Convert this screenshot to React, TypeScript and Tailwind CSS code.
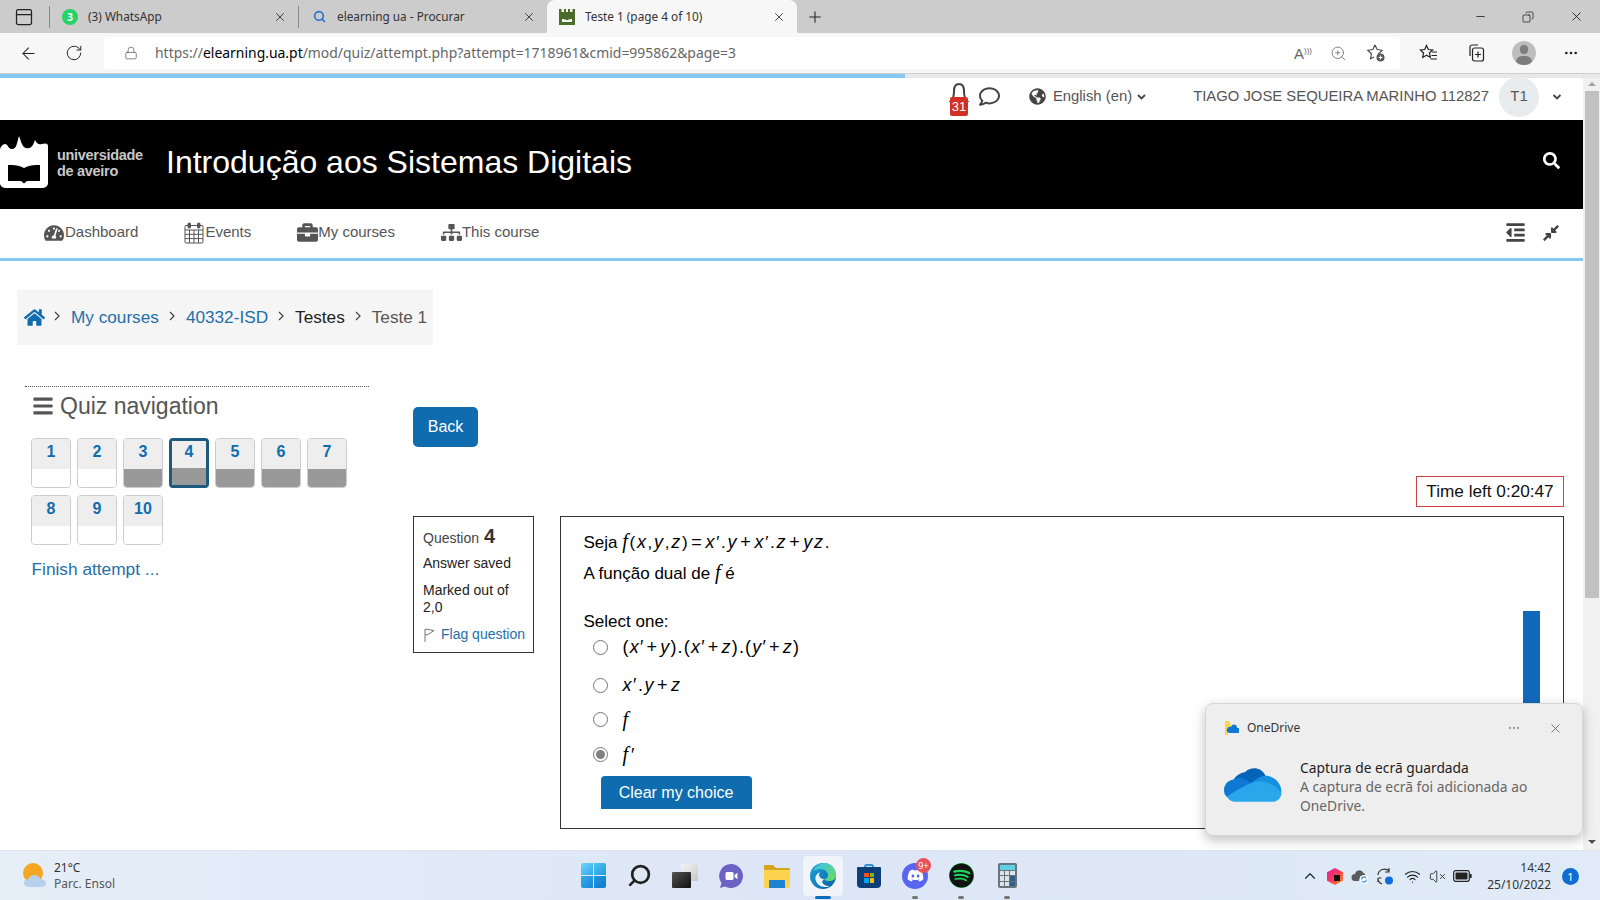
import React from "react";
import {
  ArrowLeft,
  ChevronUp,
  Copy,
  Lock,
  Minus,
  MoreHorizontal,
  PanelTop,
  Plus,
  RotateCw,
  Search,
  VolumeX,
  Wifi,
  X,
  ZoomIn,
} from "lucide-react";
import {
  FaBars,
  FaBriefcase,
  FaCompressAlt,
  FaDiscord,
  FaGlobeAmericas,
  FaHome,
  FaOutdent,
  FaRegComment,
  FaSearch,
  FaSitemap,
  FaSpotify,
  FaTachometerAlt,
} from "react-icons/fa";

const winFont = "font-['Noto_Sans',sans-serif]";

const Tab = ({ icon, title, active, width }: { icon: React.ReactNode; title: string; active?: boolean; width: string }) => (
  <div className={`${width} h-full flex items-center pl-[11px] pr-[11px] ${active ? "bg-[#f7f7f7] rounded-t-lg" : ""}`}>
    <span className="w-[18px] h-[18px] flex items-center justify-center shrink-0">{icon}</span>
    <span className="ml-[9px] flex-1 text-[11.8px] text-[#333] truncate">{title}</span>
    <X size={14} strokeWidth={1.4} className="text-[#222] shrink-0" />
  </div>
);

const CastleIcon = () => (
  <svg width="18" height="18" viewBox="0 0 18 18">
    <path d="M1 1h2.500v3H6V1h2v3h2V1h2v3h2.500V1H17v16H1z" fill="#4a6b2a" />
    <path d="M4 11c2 0 4 .5 5 1.500 1-1 3-1.500 5-1.500v3H4z" fill="#f7f7f7" />
  </svg>
);

const BellBadge = () => (
  <div className="relative w-[22px] h-[34px] mt-[2px]">
    <svg width="22" height="26" viewBox="0 0 22 26" fill="none" stroke="#444" strokeWidth="2" className="absolute left-0 top-0">
      <path d="M11 3c-4 0-5 3-5 7 0 5-1 8-3 10h16c-2-2-3-5-3-10 0-4-1-7-5-7z" />
    </svg>
    <span className="absolute left-[2px] bottom-[-1px] w-[18px] h-[19px] bg-[#d32f24] rounded-[2px] text-white text-[13px] leading-[19px] text-center">31</span>
  </div>
);

const CalendarIcon = () => (
  <svg width="20" height="22" viewBox="0 0 20 22" fill="none" stroke="#555" strokeWidth="1">
    <rect x="1" y="3.500" width="18" height="17.500" rx="1" />
    <path d="M1 8h18M1 12.300h18M1 16.600h18M5.500 8v13M10 8v13M14.500 8v13" />
    <rect x="4" y="1" width="2.500" height="5" rx="1" fill="#555" />
    <rect x="13.500" y="1" width="2.500" height="5" rx="1" fill="#555" />
  </svg>
);

const NavItem = ({ icon, label, className }: { icon: React.ReactNode; label: string; className: string }) => (
  <a className={`flex items-center text-[15px] text-[#555] whitespace-nowrap ${className}`}>
    <span className="w-[21px] flex justify-start">{icon}</span>
    {label}
  </a>
);

const Crumb = ({ children }: { children: React.ReactNode }) => <span className="text-[#1f6fa8]">{children}</span>;
const Sep = () => (
  <svg width="7" height="10" viewBox="0 0 7 10" fill="none" stroke="#444" strokeWidth="1.200" className="mx-[10px] mb-[3px] shrink-0">
    <path d="M1 1l4 4-4 4" />
  </svg>
);

const QuizButton = ({ n, saved, current }: { n: number; saved?: boolean; current?: boolean }) => (
  <div className={`w-[40px] h-[50px] rounded-[4px] overflow-hidden flex flex-col ${current ? "border-[3px] border-[#1d5a7c]" : "border border-[#ccc]"}`}>
    <div className={`${current ? "h-[27px] pt-[1px]" : "h-[30px] pt-[3px]"} bg-[#eeeeee] text-center text-[16px] leading-[20px] font-bold text-[#0f6cae]`}>{n}</div>
    <div className={`flex-1 ${saved ? "bg-[#999999]" : "bg-white"}`} />
  </div>
);

const M = ({ children }: { children: React.ReactNode }) => <span className="italic text-[18px]">{children}</span>;
const F = ({ children }: { children: React.ReactNode }) => (
  <span className="italic text-[20px] font-['Liberation_Serif',serif]">{children}</span>
);
const Op = ({ children }: { children: React.ReactNode }) => <span className="mx-[2px] text-[18px]">{children}</span>;

const Radio = ({ checked }: { checked?: boolean }) => (
  <span className="w-[15px] h-[15px] rounded-full border border-[#767676] bg-white shrink-0 flex items-center justify-center">
    {checked && <span className="w-[9px] h-[9px] rounded-full bg-[#808080]" />}
  </span>
);

const Option = ({ checked, className, children }: { checked?: boolean; className: string; children: React.ReactNode }) => (
  <label className={`flex items-center pl-[9px] ${className}`}>
    <Radio checked={checked} />
    <span className="ml-[15px] text-[18px] leading-[20px] text-black">{children}</span>
  </label>
);

const OneDriveCloud = ({ size = 58 }: { size?: number }) => (
  <svg width={size} height={size * 0.62} viewBox="0 0 60 37">
    <path d="M22 6c6-6 17-5 21 4l-14 15L10 14c2-4 7-7 12-8z" fill="#0364b8" />
    <path d="M9 14C3 15 0 20 0 25c0 3 1 5 3 7l24-8 3-6-12-6c-3-1-6 1-9 2z" fill="#0f78d4" />
    <path d="M43 10c-5 0-9 3-13 6l-5 4 20 13 14-5c2-8-6-18-16-18z" fill="#1490df" />
    <path d="M3 32c2 3 5 5 9 5h38c5 0 9-4 9.500-9-7-9-16-13-24-12-9 1-22 8-32.500 16z" fill="#28a8ea" />
  </svg>
);

const WinLogo = () => (
  <div className="grid grid-cols-2 gap-[1px] w-[25px] h-[25px]">
    <span className="bg-gradient-to-br from-[#6fd5f7] to-[#2ba8e8] rounded-tl-[2px]" />
    <span className="bg-gradient-to-br from-[#4fc3f2] to-[#1e9be0] rounded-tr-[2px]" />
    <span className="bg-gradient-to-br from-[#35ace8] to-[#1488d8] rounded-bl-[2px]" />
    <span className="bg-gradient-to-br from-[#2398e0] to-[#0f78cf] rounded-br-[2px]" />
  </div>
);

const TaskView = () => (
  <div className="relative w-[26px] h-[24px]">
    <span className="absolute right-0 top-0 w-[17px] h-[17px] bg-gradient-to-br from-[#f5f5f5] to-[#c8c8c8] rounded-[1px]" />
    <span className="absolute left-0 bottom-0 w-[19px] h-[16px] bg-gradient-to-br from-[#555] to-[#111] rounded-[1px]" />
  </div>
);

const ChatIcon = () => (
  <svg width="26" height="26" viewBox="0 0 26 26">
    <path d="M13 1a12 12 0 1 1-6 22.400L2 25l1.500-5A12 12 0 0 1 13 1z" fill="#6b62c4" />
    <rect x="7.500" y="9" width="8" height="8" rx="1.500" fill="#fff" />
    <path d="M16.500 12l3-2.200v6.400l-3-2.200z" fill="#fff" />
  </svg>
);

const Explorer = () => (
  <svg width="26" height="24" viewBox="0 0 26 24">
    <path d="M0 2a1 1 0 0 1 1-1h8l3 3h13a1 1 0 0 1 1 1v3H0z" fill="#d9a520" />
    <path d="M0 6h26v17a1 1 0 0 1-1 1H1a1 1 0 0 1-1-1z" fill="#fcd34d" />
    <path d="M5 17a1 1 0 0 1 1-1h14a1 1 0 0 1 1 1v7H5z" fill="#1e82d2" />
  </svg>
);

const EdgeIcon = () => (
  <svg width="26" height="26" viewBox="0 0 26 26">
    <defs>
      <linearGradient id="edgeA" x1="0" y1="0" x2="1" y2="1">
        <stop offset="0" stopColor="#1fa3d8" />
        <stop offset="1" stopColor="#0a5ea8" />
      </linearGradient>
      <linearGradient id="edgeB" x1="0" y1="0" x2="1" y2="1">
        <stop offset="0" stopColor="#35c1f1" />
        <stop offset="1" stopColor="#6fdc5a" />
      </linearGradient>
    </defs>
    <circle cx="13" cy="13" r="13" fill="url(#edgeA)" />
    <path d="M3 8C6 2 11 0 15 0c6 0 11 5 11 12 0 4-3 6-7 6-3 0-4-1-5-2 3 0 4-2 4-4 0-3-3-6-7-6-3 0-6 1-8 2z" fill="url(#edgeB)" />
    <path d="M14 16c-3 0-5-2-5-4 0-1 .5-2 1-2.500C7 10 5 13 5.500 16.500 6.500 21 10 24 15 24c2 0 4-.5 5-1-3 .5-7-1-8-4 .5-1 1.500-2.500 2-3z" fill="#e8f6fc" />
  </svg>
);

const StoreIcon = () => (
  <div className="relative w-[24px] h-[24px] mt-[1px]">
    <span className="absolute left-[7px] top-0 w-[10px] h-[6px] border-2 border-b-0 border-[#2f8fd8] rounded-t-[3px]" />
    <div className="absolute left-0 top-[3px] w-[24px] h-[21px] bg-[#0f3f78] rounded-b-[4px] rounded-t-[1px] flex items-center justify-center">
      <div className="grid grid-cols-2 gap-[1px] w-[10px] h-[10px]">
        <span className="bg-[#f25022]" />
        <span className="bg-[#7fba00]" />
        <span className="bg-[#00a4ef]" />
        <span className="bg-[#ffb900]" />
      </div>
    </div>
  </div>
);

const DiscordIcon = () => (
  <div className="relative w-[26px] h-[26px] rounded-full bg-[#5865f2] flex items-center justify-center">
    <FaDiscord size={17} className="text-white" />
    <span className="absolute left-[14px] top-[-5px] w-[15px] h-[15px] rounded-full bg-[#e8505b] text-white text-[9px] leading-[15px] text-center">9+</span>
  </div>
);

const SpotifyIcon = () => (
  <div className="w-[25px] h-[25px] rounded-full bg-[#1ed760] flex items-center justify-center">
    <FaSpotify size={25} className="text-[#121212]" />
  </div>
);

const CalcIcon = () => (
  <div className="w-[19px] h-[25px] bg-[#66757f] rounded-[2px] p-[2px] flex flex-col gap-[1px]">
    <span className="h-[5px] bg-[#5fd0e0]" />
    <div className="grid grid-cols-3 gap-[1px] flex-1">
      <span className="bg-[#dde3e6]" /><span className="bg-[#dde3e6]" /><span className="bg-[#dde3e6]" />
      <span className="bg-[#dde3e6]" /><span className="bg-[#dde3e6]" /><span className="bg-[#2f5f88]" />
      <span className="bg-[#dde3e6]" /><span className="bg-[#dde3e6]" /><span className="bg-[#2f5f88]" />
    </div>
  </div>
);

const TaskIcon = ({ children, active, running }: { children: React.ReactNode; active?: boolean; running?: boolean }) => (
  <div className="relative w-[46px] h-[50px] flex items-center justify-center pb-[1px]">
    {active && <span className="absolute left-[3px] top-[5px] w-[40px] h-[40px] rounded-[4px] bg-white/60" />}
    <span className="relative">{children}</span>
    {active && <span className="absolute left-[15px] bottom-[2px] w-[16px] h-[3px] rounded bg-[#0f6cbd]" />}
    {running && <span className="absolute left-[20px] bottom-[2px] w-[6px] h-[3px] rounded bg-[#777]" />}
  </div>
);

const WeatherIcon = () => (
  <svg width="26" height="26" viewBox="0 0 26 26">
    <circle cx="11" cy="10" r="10" fill="#f5a623" />
    <path d="M7 24c-3 0-5-1.500-5-4s2-4 4.500-4c1-3 4-4 6-4 3 0 5 2 5.500 4 3 0 6 1.500 6 4s-2 4-5 4z" fill="#b7d0ee" />
  </svg>
);

const FavStar = () => (
  <svg width="20" height="20" viewBox="0 0 20 20" fill="none" stroke="#444" strokeWidth="1.100">
    <path d="M9 2l2.200 4.600 5 .7-3.600 3.500.6 3.400M9 2L6.800 6.600l-5 .7 3.600 3.500-.9 5 3.500-1.800" />
    <circle cx="14.500" cy="14.500" r="4" fill="#555" stroke="none" />
    <path d="M14.500 12.500v4M12.500 14.500h4" stroke="#fff" />
  </svg>
);

const FavoritesIcon = () => (
  <svg width="20" height="20" viewBox="0 0 20 20" fill="none" stroke="#222" strokeWidth="1.200">
    <path d="M7.500 2.500l1.800 4 4.300.5-3.200 3 .9 4.400-3.800-2.200-3.800 2.200.9-4.400-3.200-3 4.300-.5z" />
    <path d="M13 9h5M12.500 12.500h5.500M11.500 16h6.500" />
  </svg>
);

const CollectionsIcon = () => (
  <svg width="20" height="20" viewBox="0 0 20 20" fill="none" stroke="#222" strokeWidth="1.200">
    <path d="M4 13V4a2 2 0 0 1 2-2h6" />
    <rect x="6.500" y="5" width="11" height="13" rx="2" />
    <path d="M12 8.500v6M9 11.500h6" />
  </svg>
);

const BatteryIcon = () => (
  <svg width="19" height="12" viewBox="0 0 19 12" fill="none">
    <rect x="0.700" y="0.700" width="15.600" height="10.600" rx="2" stroke="#222" strokeWidth="1.200" />
    <rect x="2.500" y="2.500" width="12" height="7" rx="1" fill="#222" />
    <rect x="17" y="4" width="1.600" height="4" fill="#222" />
  </svg>
);

const FlagIcon = () => (
  <svg width="12" height="14" viewBox="0 0 12 14" fill="none" stroke="#777" strokeWidth="1">
    <path d="M2 1v13M2 1l9 1.500-6 4-3 .5" />
  </svg>
);

export default function App() {
  return (
    <div className="relative w-[1600px] h-[900px] overflow-hidden flex flex-col bg-white font-['Liberation_Sans',sans-serif]">
      {/* tab strip */}
      <div className={`h-[33px] bg-[#cccccc] flex items-end pl-[14px] pr-0 ${winFont}`}>
        <div className="h-full flex items-center w-[35px] shrink-0">
          <PanelTop size={20} strokeWidth={1.5} className="text-[#222]" />
        </div>
        <span className="w-px h-[22px] bg-[#888] mb-[5px]" />
        <Tab
          width="w-[248px]"
          title="(3) WhatsApp"
          icon={
            <span className="w-[16px] h-[16px] rounded-full bg-[#25d366] text-white text-[10px] font-bold leading-[16px] text-center">3</span>
          }
        />
        <span className="w-px h-[22px] bg-[#888] mb-[5px]" />
        <Tab width="w-[248px]" title="elearning ua - Procurar" icon={<Search size={13} strokeWidth={3} className="text-[#2a72c8]" />} />
        <Tab width="w-[250px]" active title="Teste 1 (page 4 of 10)" icon={<CastleIcon />} />
        <div className="h-full w-[36px] flex items-center justify-center">
          <Plus size={18} strokeWidth={1.4} className="text-[#222]" />
        </div>
        <div className="flex-1" />
        <div className="h-full flex items-center">
          <span className="w-[48px] flex justify-center"><Minus size={13} strokeWidth={1.4} className="text-[#111]" /></span>
          <span className="w-[48px] flex justify-center"><Copy size={12} strokeWidth={1.4} className="text-[#111] -scale-x-100" /></span>
          <span className="w-[48px] flex justify-center"><X size={15} strokeWidth={1.3} className="text-[#111]" /></span>
        </div>
      </div>

      {/* toolbar */}
      <div className="h-[40px] bg-[#f7f7f7] flex items-center">
        <div className="w-[104px] flex items-center shrink-0">
          <ArrowLeft size={19} strokeWidth={1.3} className="ml-[19px] text-[#222]" />
          <RotateCw size={18} strokeWidth={1.3} className="ml-[27px] text-[#222]" />
        </div>
        <div className="w-[1296px] h-[32px] bg-white rounded-[4px] flex items-center pl-[20px] pr-[14px] shrink-0">
          <Lock size={14} strokeWidth={1.2} className="text-[#555]" />
          <span className={`ml-[17px] text-[13.930px] text-[#666] flex-1 ${winFont}`}>
            https://<span className="text-black">elearning.ua.pt</span>/mod/quiz/attempt.php?attempt=1718961&amp;cmid=995862&amp;page=3
          </span>
          <span className="text-[15px] text-[#666] mr-[18px] leading-none whitespace-nowrap">
            A<span className="text-[8px] align-super">)))</span>
          </span>
          <ZoomIn size={17} strokeWidth={1.1} className="text-[#666] mr-[19px]" />
          <FavStar />
        </div>
        <div className="flex-1 flex items-center pl-[19px]">
          <FavoritesIcon />
          <span className="ml-[27px]"><CollectionsIcon /></span>
          <span className="relative ml-[26px] w-[24px] h-[24px] rounded-full bg-[#bdbdbd] overflow-hidden">
            <span className="absolute left-[8px] top-[4px] w-[8px] h-[9px] rounded-full bg-[#7d7d7d]" />
            <span className="absolute left-[4px] top-[15px] w-[16px] h-[12px] rounded-full bg-[#7d7d7d]" />
          </span>
          <MoreHorizontal size={16} className="ml-[27px] text-[#222]" />
        </div>
      </div>

      {/* load progress */}
      <div className="h-[5px] bg-[#e8e8e8] border-t border-[#cfcfcf]">
        <div className="h-full w-[905px] bg-[#85c8f3]" />
      </div>

      <div className="flex-1 min-h-0 flex">
        {/* page */}
        <div className="flex-1 min-w-0 flex flex-col">
          <div className="h-[42px] flex items-center text-[14.850px] text-[#555] pr-[21px] pb-[5px] shrink-0">
            <div className="flex-1" />
            <BellBadge />
            <FaRegComment size={21} className="ml-[9px] text-[#444]" />
            <FaGlobeAmericas size={17} className="ml-[29px] text-[#444]" />
            <span className="ml-[7px]">English (en)</span>
            <svg width="9" height="6" viewBox="0 0 9 6" fill="none" stroke="#444" strokeWidth="1.800" className="ml-[5px]"><path d="M1 1l3.500 3.500L8 1" /></svg>
            <span className="ml-[47px] whitespace-nowrap">TIAGO JOSE SEQUEIRA MARINHO 112827</span>
            <span className="ml-[10px] w-[40px] h-[40px] rounded-full bg-[#e9ecef] flex items-center justify-center shrink-0">T1</span>
            <svg width="10" height="6" viewBox="0 0 9 6" fill="none" stroke="#444" strokeWidth="1.800" className="ml-[13px]"><path d="M1 1l3.500 3.500L8 1" /></svg>
          </div>

          <div className="h-[89px] bg-black flex items-center text-white shrink-0">
            <svg width="48" height="52" viewBox="0 0 48 52" className="-mt-[5px] shrink-0">
              <path d="M0 14c0-3 3-6 5-6 3 0 3 5 7 5 5 0 5-7 7-13 2 5 3 11 7 12 5 1 7-2 9-8 2 4 4 5 7 4 3-1 6-1 6 2v37a5 5 0 0 1-5 5H5a5 5 0 0 1-5-5z" fill="#fff" />
              <path d="M8 29c6 0 12 .5 16 3 4-2.500 10-3 16-3v16H27l-3 2.500L21 45H8z" fill="#000" />
            </svg>
            <div className="ml-[9px] w-[100px] text-[#c8c8c8] text-[14.500px] leading-[16px] font-bold -mt-[3px] tracking-[-0.3px]">
              universidade<br />de aveiro
            </div>
            <h1 className="ml-[9px] text-[32px] font-normal -mt-[5px]">Introdução aos Sistemas Digitais</h1>
            <div className="flex-1" />
            <FaSearch size={17} className="mr-[23px] -mt-[8px]" />
          </div>

          <div className="h-[52px] border-b-[3px] border-[#85c8f3] flex items-center pb-[2px] shrink-0">
            <NavItem className="ml-[44px]" label="Dashboard" icon={<FaTachometerAlt size={20} />} />
            <NavItem className="ml-[46px]" label="Events" icon={<CalendarIcon />} />
            <NavItem className="ml-[46px]" label="My courses" icon={<FaBriefcase size={21} />} />
            <NavItem className="ml-[46px]" label="This course" icon={<FaSitemap size={21} />} />
            <div className="flex-1" />
            <FaOutdent size={21} className="text-[#444] mr-[16px]" />
            <FaCompressAlt size={18} className="text-[#444] mr-[23px]" />
          </div>

          <div className="mt-[29px] ml-[17px] w-[416px] h-[55px] bg-[#f5f5f5] flex items-center pl-[7px] text-[17.200px] whitespace-nowrap shrink-0">
            <FaHome size={21} className="text-[#0f6cae] mr-[-1px]" />
            <Sep />
            <Crumb>My courses</Crumb>
            <Sep />
            <Crumb>40332-ISD</Crumb>
            <Sep />
            <span className="text-[#222]">Testes</span>
            <Sep />
            <span className="text-[#555]">Teste 1</span>
          </div>

          <div className="mt-[41px] flex flex-1 min-h-0">
            {/* quiz nav */}
            <aside className="ml-[25px] w-[344px] shrink-0 border-t border-dotted border-[#555] pl-[6.500px]">
              <div className="mt-[4px] flex items-center h-[30px] text-[23px] text-[#555]">
                <FaBars size={22} className="mr-[6.500px]" />
                Quiz navigation
              </div>
              <div className="mt-[17px] -ml-[0.5px] flex flex-wrap gap-x-[6px] gap-y-[7px] w-[320px]">
                <QuizButton n={1} />
                <QuizButton n={2} />
                <QuizButton n={3} saved />
                <QuizButton n={4} saved current />
                <QuizButton n={5} saved />
                <QuizButton n={6} saved />
                <QuizButton n={7} saved />
                <QuizButton n={8} />
                <QuizButton n={9} />
                <QuizButton n={10} />
              </div>
              <a className="block mt-[12px] text-[17.300px] text-[#1f6fa8]">Finish attempt ...</a>
            </aside>

            {/* question */}
            <section className="ml-[44px] mr-[19px] flex-1 min-w-0 flex flex-col">
              <button className="mt-[21px] w-[65px] h-[40px] rounded-[5px] bg-[#0f6cae] text-white text-[16px]">Back</button>
              <div className="mt-[29px] self-end w-[148px] h-[31px] border border-[#c44] flex items-center justify-center text-[17.200px] text-[#111]">Time left 0:20:47</div>
              <div className="mt-[9px] h-[313px] flex gap-[26px]">
                <div className="w-[121px] h-[137px] border border-[#333] pl-[9px] pt-[4px] text-[14px] text-[#222] shrink-0">
                  <div className="h-[22px] flex items-baseline text-[#444]">
                    Question<span className="ml-[5px] text-[20px] font-bold text-[#333]">4</span>
                  </div>
                  <div className="mt-[11px] leading-[18px]">Answer saved</div>
                  <div className="mt-[10px] leading-[17px]">Marked out of<br />2,0</div>
                  <a className="mt-[8px] flex items-center text-[#1f6fa8]">
                    <span className="mr-[6px]"><FlagIcon /></span>Flag question
                  </a>
                </div>
                <div className="relative flex-1 border border-[#333] pl-[22.500px] pt-[12px] overflow-hidden">
                  <div className="text-[17px] leading-[24px] text-black">
                    Seja{" "}
                    <span className="tracking-[1.700px]">
                      <F>f</F>(<M>x</M>,<M>y</M>,<M>z</M>)<Op>=</Op><M>x</M>′.<M>y</M><Op>+</Op><M>x</M>′.<M>z</M><Op>+</Op><M>yz</M>.
                    </span>
                  </div>
                  <div className="mt-[5px] text-[17px] leading-[24px] text-black">
                    A função dual de <F>f</F> é
                  </div>
                  <div className="mt-[24px] text-[17px] leading-[24px] text-black">Select one:</div>
                  <Option className="mt-[3px] h-[20px]">
                    <span className="tracking-[1.200px]">(<M>x</M>′<Op>+</Op><M>y</M>).(<M>x</M>′<Op>+</Op><M>z</M>).(<M>y</M>′<Op>+</Op><M>z</M>)</span>
                  </Option>
                  <Option className="mt-[18px] h-[20px]">
                    <span className="tracking-[1.500px]"><M>x</M>′.<M>y</M><Op>+</Op><M>z</M></span>
                  </Option>
                  <Option className="mt-[14px] h-[20px]"><F>f</F></Option>
                  <Option className="mt-[15px] h-[20px]" checked><span><F>f</F><span className="ml-[3px]">′</span></span></Option>
                  <button className="block mt-[12px] ml-[17px] w-[151px] h-[33px] rounded-t-[4px] bg-[#0f6cae] text-white text-[16px]">Clear my choice</button>
                  <span className="absolute right-[23px] top-[94px] w-[17px] h-[120px] bg-[#1269bb]" />
                </div>
              </div>
            </section>
          </div>
        </div>

        {/* scrollbar */}
        <div className="w-[17px] shrink-0 bg-[#f1f1f1] flex flex-col items-center">
          <span className="mt-[4px] w-0 h-0 border-x-[4px] border-x-transparent border-b-[4px] border-b-[#a3a3a3]" />
          <span className="mt-[5px] w-[14px] h-[507px] bg-[#c1c1c1]" />
          <span className="mt-auto mb-[6px] w-0 h-0 border-x-[4px] border-x-transparent border-t-[4px] border-t-[#505050]" />
        </div>
      </div>

      {/* taskbar */}
      <div className={`h-[50px] grid grid-cols-[1fr_auto_1fr] bg-gradient-to-r from-[#e6eef8] via-[#dce6f6] to-[#e0ebf7] border-t border-[#e0e4ea] ${winFont}`}>
        <div className="flex items-center pl-[22px]">
          <WeatherIcon />
          <div className="ml-[6px] text-[12px] leading-[16px] text-[#333]">
            21°C
            <div className="text-[#555]">Parc. Ensol</div>
          </div>
        </div>
        <div className="flex">
          <TaskIcon><WinLogo /></TaskIcon>
          <TaskIcon><Search size={25} strokeWidth={2.6} className="text-[#222] -scale-x-100" /></TaskIcon>
          <TaskIcon><TaskView /></TaskIcon>
          <TaskIcon><ChatIcon /></TaskIcon>
          <TaskIcon><Explorer /></TaskIcon>
          <TaskIcon active><EdgeIcon /></TaskIcon>
          <TaskIcon><StoreIcon /></TaskIcon>
          <TaskIcon running><DiscordIcon /></TaskIcon>
          <TaskIcon running><SpotifyIcon /></TaskIcon>
          <TaskIcon running><CalcIcon /></TaskIcon>
        </div>
        <div className="flex items-center justify-end pr-[21px] text-[#222]">
          <ChevronUp size={18} strokeWidth={1.5} className="mr-[8px]" />
          <svg width="16" height="17" viewBox="0 0 16 17" className="mr-[8px]">
            <defs>
              <linearGradient id="jb" x1="0" y1="0" x2="1" y2="1">
                <stop offset="0" stopColor="#d6249f" />
                <stop offset="0.500" stopColor="#f9375a" />
                <stop offset="1" stopColor="#fb9a1e" />
              </linearGradient>
            </defs>
            <path d="M8 0l8 4.300v8.400L8 17l-8-4.300V4.300z" fill="url(#jb)" />
            <rect x="7" y="7" width="6" height="6" fill="#111" />
          </svg>
          <svg width="18" height="16" viewBox="0 0 18 16" className="mr-[7px]">
            <path d="M4 13a3.500 3.500 0 0 1 0-7 4.500 4.500 0 0 1 8.500-1 3 3 0 0 1 2 3H10l-2 5z" fill="#5a5a5a" />
            <circle cx="13" cy="11.500" r="4.500" fill="#fff" />
            <path d="M10.500 11.500a2.500 2.500 0 0 1 4.500-1.500M15.500 11.500a2.500 2.500 0 0 1-4.500 1.500" fill="none" stroke="#2a8be0" strokeWidth="1.200" />
          </svg>
          <svg width="18" height="19" viewBox="0 0 18 19" fill="none" stroke="#333" strokeWidth="1.200" className="mr-[10px]">
            <path d="M2 8a6.500 6.500 0 0 1 11-4M13 1v4h-4M2 12a6 6 0 0 0 4 5M2 11v4M2 11h3.500" />
            <circle cx="13" cy="13.500" r="4" fill="#0f6cd8" stroke="none" />
          </svg>
          <Wifi size={17} strokeWidth={1.6} className="mr-[8px]" />
          <VolumeX size={17} strokeWidth={1.2} className="mr-[7px]" />
          <BatteryIcon />
          <div className="ml-[15px] text-[12px] leading-[17px] text-right text-[#333]">
            14:42
            <div>25/10/2022</div>
          </div>
          <span className="ml-[11px] w-[17px] h-[17px] rounded-full bg-[#0f6cd0] text-white text-[11px] leading-[17px] text-center">1</span>
        </div>
      </div>

      {/* toast */}
      <div className={`absolute left-[1205px] top-[703px] w-[378px] h-[133px] rounded-[8px] bg-[#eeeeee] border border-[#d6d6d6] shadow-[0_4px_12px_rgba(0,0,0,0.25)] ${winFont}`}>
        <div className="flex items-center h-[20px] mt-[14px] pl-[18px] pr-[19px]">
          <svg width="15" height="14" viewBox="0 0 15 14" className="shrink-0">
            <path d="M1 0h4l3 7H1z" fill="#fcd34d" />
            <path d="M1 4h3v10H1z" fill="#fcd34d" />
            <path d="M5 12a3 3 0 0 1 2-6 3 3 0 0 1 6 1 2.500 2.500 0 0 1 1 5z" fill="#0f78d4" />
          </svg>
          <span className="ml-[8px] text-[12px] text-[#333]">OneDrive</span>
          <div className="flex-1" />
          <MoreHorizontal size={14} className="text-[#999] mr-[27px]" />
          <X size={15} strokeWidth={1.2} className="text-[#555]" />
        </div>
        <div className="flex mt-[20px] pl-[18px]">
          <div className="w-[76px] pt-[8px] shrink-0"><OneDriveCloud /></div>
          <div className="text-[13.800px] leading-[19px] text-[#666]">
            <div className="text-[#222]">Captura de ecrã guardada</div>
            A captura de ecrã foi adicionada ao<br />OneDrive.
          </div>
        </div>
      </div>
    </div>
  );
}
